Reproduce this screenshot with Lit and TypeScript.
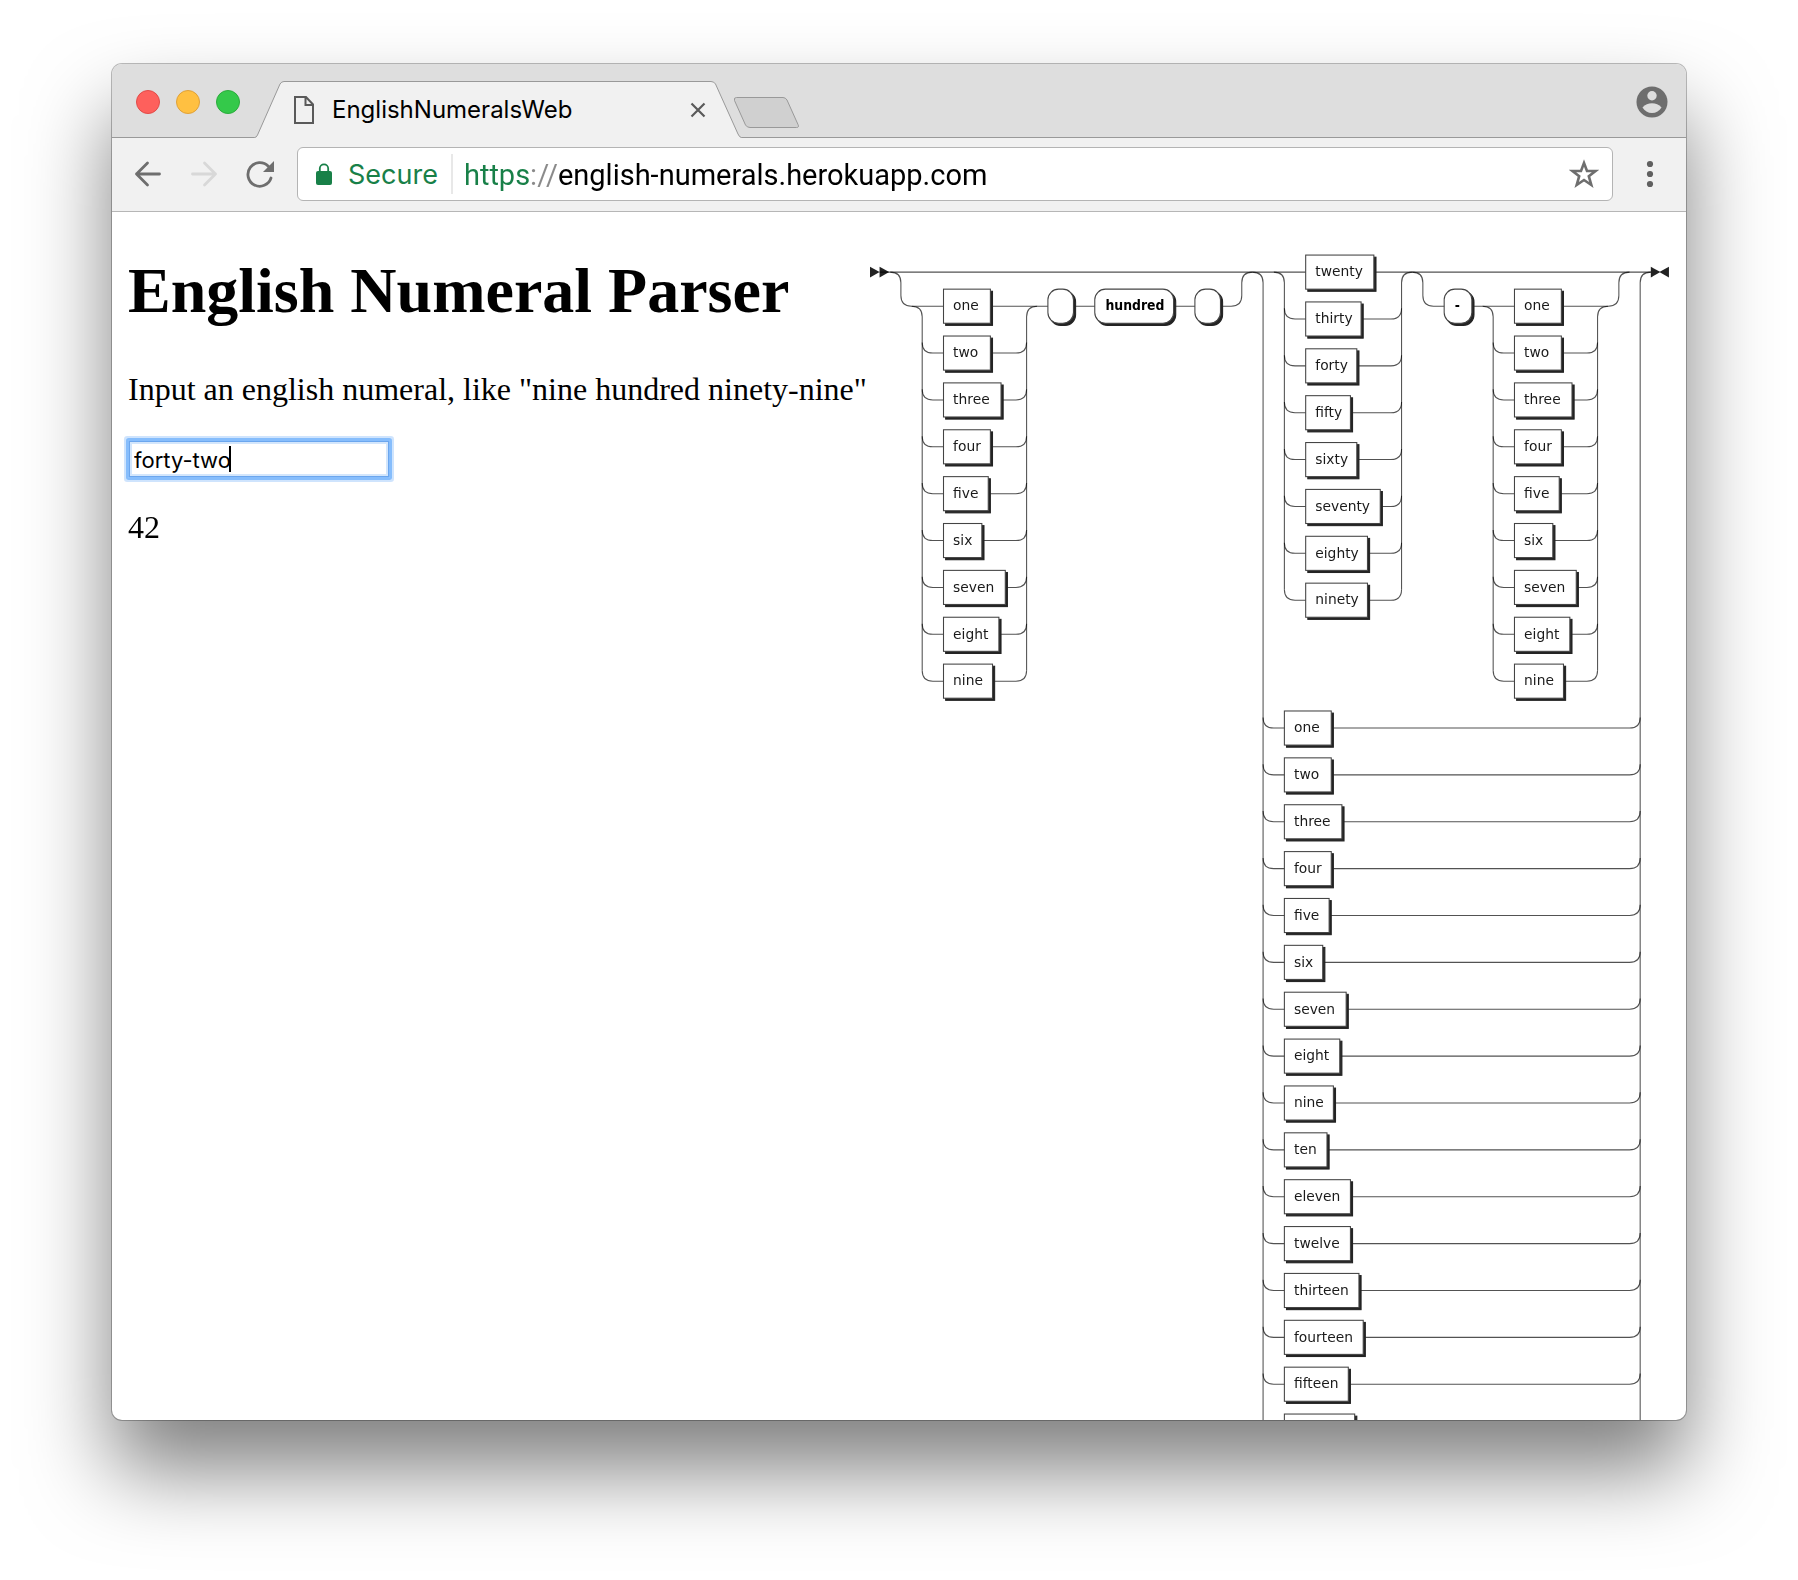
import { LitElement, html, svg, css } from "lit";
import { customElement, state, query } from "lit/decorators.js";
import { styleMap } from "lit/directives/style-map.js";

type Box = [label: string, width: number];

const UNITS: Box[] = [
  ["one", 44], ["two", 44], ["three", 54], ["four", 44], ["five", 42],
  ["six", 36], ["seven", 58], ["eight", 52], ["nine", 46],
];

const TENS: Box[] = [
  ["twenty", 64], ["thirty", 52], ["forty", 48], ["fifty", 42],
  ["sixty", 48], ["seventy", 70], ["eighty", 58], ["ninety", 58],
];

const TEENS: Box[] = [
  ["ten", 40], ["eleven", 62], ["twelve", 62], ["thirteen", 70], ["fourteen", 74], ["fifteen", 60],
];

/** Teens past the fold of the diagram: the first one only shows the top of its box. */
const LATE_TEENS = ["sixteen", "seventeen", "eighteen", "nineteen"];
const FOLD: Box = ["", 66];

const SMALL = [...UNITS.map(([label]) => label), ...TEENS.map(([label]) => label), ...LATE_TEENS];
const ROUND = TENS.map(([label]) => label);

/** Value of a numeral below one thousand, or null when it does not parse. */
function parseNumeral(text: string): number | null {
  const match = /^(?:(\w+) hundred(?: |$))?(?:(\w+)(?:-(\w+))?)?$/.exec(text.trim().toLowerCase());
  if (!match || !match[0]) return null;
  const [, hundreds, head, tail] = match;
  let value = 0;
  if (hundreds) {
    const n = SMALL.indexOf(hundreds) + 1;
    if (n < 1 || n > 9) return null;
    value += n * 100;
  }
  if (!head) return value;
  const ten = ROUND.indexOf(head);
  if (ten >= 0) {
    value += (ten + 2) * 10;
    if (!tail) return value;
    const n = SMALL.indexOf(tail) + 1;
    return n < 1 || n > 9 ? null : value + n;
  }
  const small = SMALL.indexOf(head) + 1;
  return small < 1 || tail ? null : value + small;
}

const ROW = 44;

/** Railroad diagram of the numeral grammar. */
@customElement("numeral-grammar")
export class NumeralGrammar extends LitElement {
  static styles = css`
    :host { display: block; }
    .diagram { display: block; width: 100%; height: auto; overflow: visible; }
    .rail { fill: none; stroke: rgba(0, 0, 0, 0.68); stroke-width: 1; }
    .shade { fill: #242424; stroke: #242424; stroke-width: 1; }
    .face { fill: #fff; stroke: #444; stroke-width: 1; }
    .arrow { fill: #222; }
    .name { font: 13px "DejaVu Sans", Verdana, sans-serif; fill: #1a1a1a; }
    .token { font: bold 13px "DejaVu Sans Condensed", "DejaVu Sans", Verdana, sans-serif; fill: #000; }
  `;

  private box(label: string, x: number, y: number, width: number) {
    return svg`
      <rect class="shade" x=${x + 2} y=${y - 14} width=${width} height="32"></rect>
      <rect class="face" x=${x} y=${y - 16} width=${width} height="32"></rect>
      ${label ? svg`<text class="name" x=${x + 9} y=${y + 4}>${label}</text>` : null}`;
  }

  private terminal(label: string, x: number, y: number, width: number) {
    return svg`
      <rect class="shade" x=${x + 2} y=${y - 14} width=${width} height="32" rx="10"></rect>
      <rect class="face" x=${x} y=${y - 16} width=${width} height="32" rx="10"></rect>
      ${label ? svg`<text class="token" x=${x + 10} y=${y + 4}>${label}</text>` : null}`;
  }

  /** Boxes stacked on rails that leave the row at y and come back to it. */
  private choice(items: Box[], x: number, y: number, right: number) {
    const left = x - 20;
    const last = y + ROW * (items.length - 1);
    return svg`
      <path class="rail" d="M${left - 10} ${y}H${right + 10}"></path>
      <path class="rail" d="M${left - 10} ${y}q10 0 10 10V${last - 10}"></path>
      <path class="rail" d="M${right + 10} ${y}q-10 0 -10 10V${last - 10}"></path>
      ${items.map(([label, width], i) => {
        const at = y + ROW * i;
        return svg`
          ${i ? svg`<path class="rail" d="M${left} ${at - 10}q0 10 10 10H${right - 10}q10 0 10 -10"></path>` : null}
          ${this.box(label, x, at, width)}`;
      })}`;
  }

  render() {
    const rest = [...UNITS, ...TEENS, FOLD];
    const first = 445;
    const last = first + ROW * (rest.length - 1);
    return html`
      <svg class="diagram" viewBox="0 0 751 ${last + 20}" role="img" aria-label="Numeral grammar">
        <polygon class="arrow" points="9 17 0 12 0 22"></polygon>
        <polygon class="arrow" points="18 17 9 12 9 22"></polygon>
        <path class="rail" d="M9 17H379M509 17H734"></path>

        <path class="rail" d="M19 17q10 0 10 10v12q0 10 10 10"></path>
        ${this.choice(UNITS, 69, 49, 147)}
        <path class="rail" d="M157 49H339q10 0 10 -10V27q0 -10 10 -10"></path>
        ${this.terminal("", 167, 49, 24)}
        ${this.terminal("hundred", 211, 49, 74)}
        ${this.terminal("", 305, 49, 24)}

        ${this.choice(TENS, 409, 17, 499)}
        <path class="rail" d="M509 17q10 0 10 10v12q0 10 10 10H575"></path>
        ${this.terminal("-", 539, 49, 26)}
        ${this.choice(UNITS, 605, 49, 683)}
        <path class="rail" d="M693 49q10 0 10 -10V27q0 -10 10 -10"></path>

        <path class="rail" d="M359 17q10 0 10 10V${last}"></path>
        <path class="rail" d="M733 17q-10 0 -10 10V${last}"></path>
        ${rest.map(([label, width], i) => {
          const at = first + ROW * i;
          return svg`
            <path class="rail" d="M369 ${at - 10}q0 10 10 10H713q10 0 10 -10"></path>
            ${this.box(label, 389, at, width)}`;
        })}

        <polygon class="arrow" points="742 17 733 12 733 22"></polygon>
        <polygon class="arrow" points="741 17 750 12 750 22"></polygon>
      </svg>`;
  }
}

@customElement("app-root")
export class AppRoot extends LitElement {
  @state() private text = "forty-two";
  @state() private caret = 0;
  @query(".numeral") private field!: HTMLInputElement;

  static styles = css`
    :host {
      display: block;
      box-sizing: border-box;
      height: 100vh;
      padding: 64px 112px 160px;
      overflow: hidden;
      background: #fff;
      color: #000;
      font-family: Inter, Roboto, sans-serif;
    }
    * { box-sizing: border-box; }
    button { padding: 0; border: 0; background: none; display: block; flex: none; }
    svg { display: block; }
    .window {
      display: flex;
      flex-direction: column;
      height: 100%;
      border-radius: 10px;
      background: #fff;
      box-shadow: 0 0 0 1px rgba(0, 0, 0, 0.26), 0 50px 84px rgba(0, 0, 0, 0.5);
    }
    .strip {
      flex: none;
      display: flex;
      align-items: flex-end;
      height: 74px;
      padding: 0 18px 0 24px;
      border-radius: 10px 10px 0 0;
      background: linear-gradient(#dedede 73px, #999 73px);
    }
    .lights { display: flex; gap: 16px; align-self: center; padding-top: 2px; }
    .light { width: 24px; height: 24px; border-radius: 50%; border: 1px solid; }
    .red { background: #fe605c; border-color: #e24b48; }
    .amber { background: #ffc041; border-color: #e0a138; }
    .green { background: #34c94a; border-color: #2bac3c; }
    .tab {
      position: relative;
      display: flex;
      align-items: center;
      width: 488px;
      height: 57px;
      margin-left: 14px;
      padding: 0 36px 0 40px;
    }
    .shape { position: absolute; left: 0; top: 0; }
    .page-icon { position: relative; flex: none; }
    .title { position: relative; flex: 1; padding-left: 18px; font-size: 24px; line-height: 32px; font-weight: 400; }
    .close { position: relative; }
    .add { margin-bottom: 8px; margin-left: -9px; }
    .avatar { margin-left: auto; align-self: center; padding-top: 2px; }
    .toolbar {
      flex: none;
      display: flex;
      align-items: center;
      height: 74px;
      padding: 0 22px 1px;
      border-bottom: 1px solid #b6b6b6;
      background: #f1f1f1;
    }
    .nav { display: flex; gap: 28px; }
    .omnibox {
      flex: 1;
      display: flex;
      align-items: center;
      min-width: 0;
      height: 54px;
      margin: 0 23px;
      padding: 0 13px 0 18px;
      border: 1px solid #b4b4b4;
      border-radius: 6px;
      background: #fff;
    }
    .secure { padding: 2px 13px 0 16px; font-size: 27px; line-height: 36px; color: #188048; }
    .rule { width: 2px; height: 40px; background: #e8e8e8; }
    .url {
      flex: 1;
      min-width: 0;
      height: 40px;
      margin-left: 11px;
      padding: 2px 0 0;
      border: 0;
      outline: 0;
      font: 29px Roboto, sans-serif;
      color: transparent;
      background: linear-gradient(to right, #188048 66px, #8a8a8a 66px, #8a8a8a 94px, #000 94px);
      -webkit-background-clip: text;
      background-clip: text;
    }
    .page {
      flex: 1;
      min-height: 0;
      display: grid;
      grid-template-columns: 742fr 800fr;
      align-items: start;
      padding: 42px 16px 0;
      border-radius: 0 0 10px 10px;
      overflow: hidden;
      font-family: "Liberation Serif", "Times New Roman", serif;
    }
    .form { display: flex; flex-direction: column; align-items: flex-start; white-space: nowrap; }
    .heading { margin: 0; font-size: 64px; line-height: 74px; font-weight: 700; }
    .hint { margin: 43px 0 32px; font-size: 32px; line-height: 37px; }
    .numeral {
      width: 262px;
      height: 38px;
      padding: 2px 5px 0;
      border: 1px solid #86bdfc;
      border-radius: 1px;
      outline: 0;
      background: linear-gradient(#000, #000) 0 5px / 2px 26px no-repeat #fff;
      caret-color: transparent;
      color: #000;
      font: 22px Inter, Roboto, sans-serif;
      box-shadow: inset 0 0 0 1px #6ba6ee, inset 0 0 0 3px #d3e6fc, 0 0 0 2px #86bdfc, 0 0 0 4px #cfe4fd;
    }
    .value { display: block; margin-top: 31px; font-size: 32px; line-height: 37px; }
  `;

  firstUpdated() {
    this.field.focus();
    this.field.setSelectionRange(this.text.length, this.text.length);
    this.placeCaret();
  }

  /** Puts the drawn caret behind the character before the insertion point. */
  private placeCaret() {
    const context = document.createElement("canvas").getContext("2d");
    if (!context) return;
    const style = getComputedStyle(this.field);
    context.font = `${style.fontSize} ${style.fontFamily}`;
    const before = this.text.slice(0, this.field.selectionStart ?? this.text.length);
    this.caret = Math.floor(context.measureText(before).width) + 4;
  }

  private onInput(event: Event) {
    this.text = (event.target as HTMLInputElement).value;
    this.placeCaret();
  }

  render() {
    return html`
      <div class="window">
        <div class="strip">
          <div class="lights">
            <button class="light red" aria-label="Close window"></button>
            <button class="light amber" aria-label="Minimize window"></button>
            <button class="light green" aria-label="Zoom window"></button>
          </div>
          <div class="tab">
            <svg class="shape" width="488" height="57" viewBox="0 0 488 57" aria-hidden="true">
              <path d="M0 57V56.5H.5Q2.500 56.500 3.500 54L26 3Q27.500 .5 30 .5H457Q460 .5 461.500 3L484 53Q485.500 56.500 487.500 56.500H488V57Z" fill="#f1f1f1"></path>
              <path d="M0 56.500H.5Q2.500 56.500 3.500 54L26 3Q27.500 .5 30 .5H457Q460 .5 461.500 3L484 53Q485.500 56.500 487.500 56.500H488" fill="none" stroke="#999"></path>
              <path d="M4 56.500H484" stroke="#f1f1f1"></path>
            </svg>
            <svg class="page-icon" width="20" height="28" viewBox="0 0 20 28" fill="none" stroke="#5a5a5a" stroke-width="2" aria-hidden="true">
              <path d="M1 1H12L19 8.500V27H1ZM11.500 1V9H19"></path>
            </svg>
            <span class="title">EnglishNumeralsWeb</span>
            <button class="close" aria-label="Close tab">
              <svg width="16" height="16" viewBox="0 0 16 16" stroke="#5a5a5a" stroke-width="2.200"><path d="M1.500 1.500L14.500 14.500M14.500 1.500L1.500 14.500"></path></svg>
            </button>
          </div>
          <button class="add" aria-label="New tab">
            <svg width="67" height="33" viewBox="0 0 67 33"><path d="M3.500 .5H50Q52.500 .5 54 3L65 27.500Q66.500 30.500 63.500 30.500H17Q14 30.500 12.500 28L1.500 3.500Q.5 .5 3.500 .5Z" fill="#d0d0d0" stroke="#999"></path></svg>
          </button>
          <button class="avatar" aria-label="Profile">
            <svg width="32" height="32" viewBox="0 0 32 32"><circle cx="16" cy="16" r="15.500" fill="#6e6e6e"></circle><circle cx="16" cy="9.800" r="4.700" fill="#dedede"></circle><path d="M6.500 21.500C9 18.500 12.500 17.300 16 17.300S23 18.500 25.500 21.500C23.500 25 20 27 16 27S8.500 25 6.500 21.500Z" fill="#dedede"></path></svg>
          </button>
        </div>

        <div class="toolbar">
          <div class="nav">
            <button aria-label="Back">
              <svg width="28" height="28" viewBox="0 0 28 28" fill="none" stroke="#6e6e6e" stroke-width="2.800" stroke-linecap="round" stroke-linejoin="round"><path d="M25.500 14H2.500M13.500 3L2.500 14L13.500 25"></path></svg>
            </button>
            <button aria-label="Forward" disabled>
              <svg width="28" height="28" viewBox="0 0 28 28" fill="none" stroke="#d8d8d8" stroke-width="2.800" stroke-linecap="round" stroke-linejoin="round"><path d="M2.500 14H25.500M14.500 3L25.500 14L14.500 25"></path></svg>
            </button>
            <button aria-label="Reload">
              <svg width="28" height="28" viewBox="0 0 28 28"><path d="M25 18A11.800 11.800 0 1 1 22.300 6.300" fill="none" stroke="#6e6e6e" stroke-width="2.800" stroke-linecap="round"></path><path d="M28 1V12H17Z" fill="#6e6e6e"></path></svg>
            </button>
          </div>
          <div class="omnibox">
            <svg width="16" height="22" viewBox="0 0 16 22" aria-hidden="true"><rect y="8" width="16" height="14" rx="2" fill="#188048"></rect><path d="M3.800 9V5.500A4.200 4.200 0 0 1 12.200 5.500V9" fill="none" stroke="#188048" stroke-width="1.800"></path></svg>
            <span class="secure">Secure</span>
            <span class="rule"></span>
            <input class="url" type="text" aria-label="Address" value="https://english-numerals.herokuapp.com" />
            <button aria-label="Bookmark this page">
              <svg width="30" height="30" viewBox="0 0 30 30" fill="none" stroke="#6e6e6e" stroke-width="2.600"><path d="M15 4L18 12H26.500L19.800 17.200L22.300 26L15 21L7.700 26L10.200 17.200L3.500 12H12Z"></path></svg>
            </button>
          </div>
          <button aria-label="Menu">
            <svg width="28" height="28" viewBox="0 0 28 28" fill="#606060"><circle cx="14" cy="4" r="3.100"></circle><circle cx="14" cy="14" r="3.100"></circle><circle cx="14" cy="24" r="3.100"></circle></svg>
          </button>
        </div>

        <main class="page">
          <section class="form">
            <h1 class="heading">English Numeral Parser</h1>
            <label class="hint" for="numeral">Input an english numeral, like "nine hundred ninety-nine"</label>
            <input
              class="numeral"
              id="numeral"
              type="text"
              autocomplete="off"
              spellcheck="false"
              style=${styleMap({ "background-position-x": `${this.caret}px` })}
              .value=${this.text}
              @input=${this.onInput}
              @keyup=${this.placeCaret}
              @click=${this.placeCaret}
            />
            <output class="value" for="numeral">${parseNumeral(this.text) ?? ""}</output>
          </section>
          <numeral-grammar></numeral-grammar>
        </main>
      </div>`;
  }
}
